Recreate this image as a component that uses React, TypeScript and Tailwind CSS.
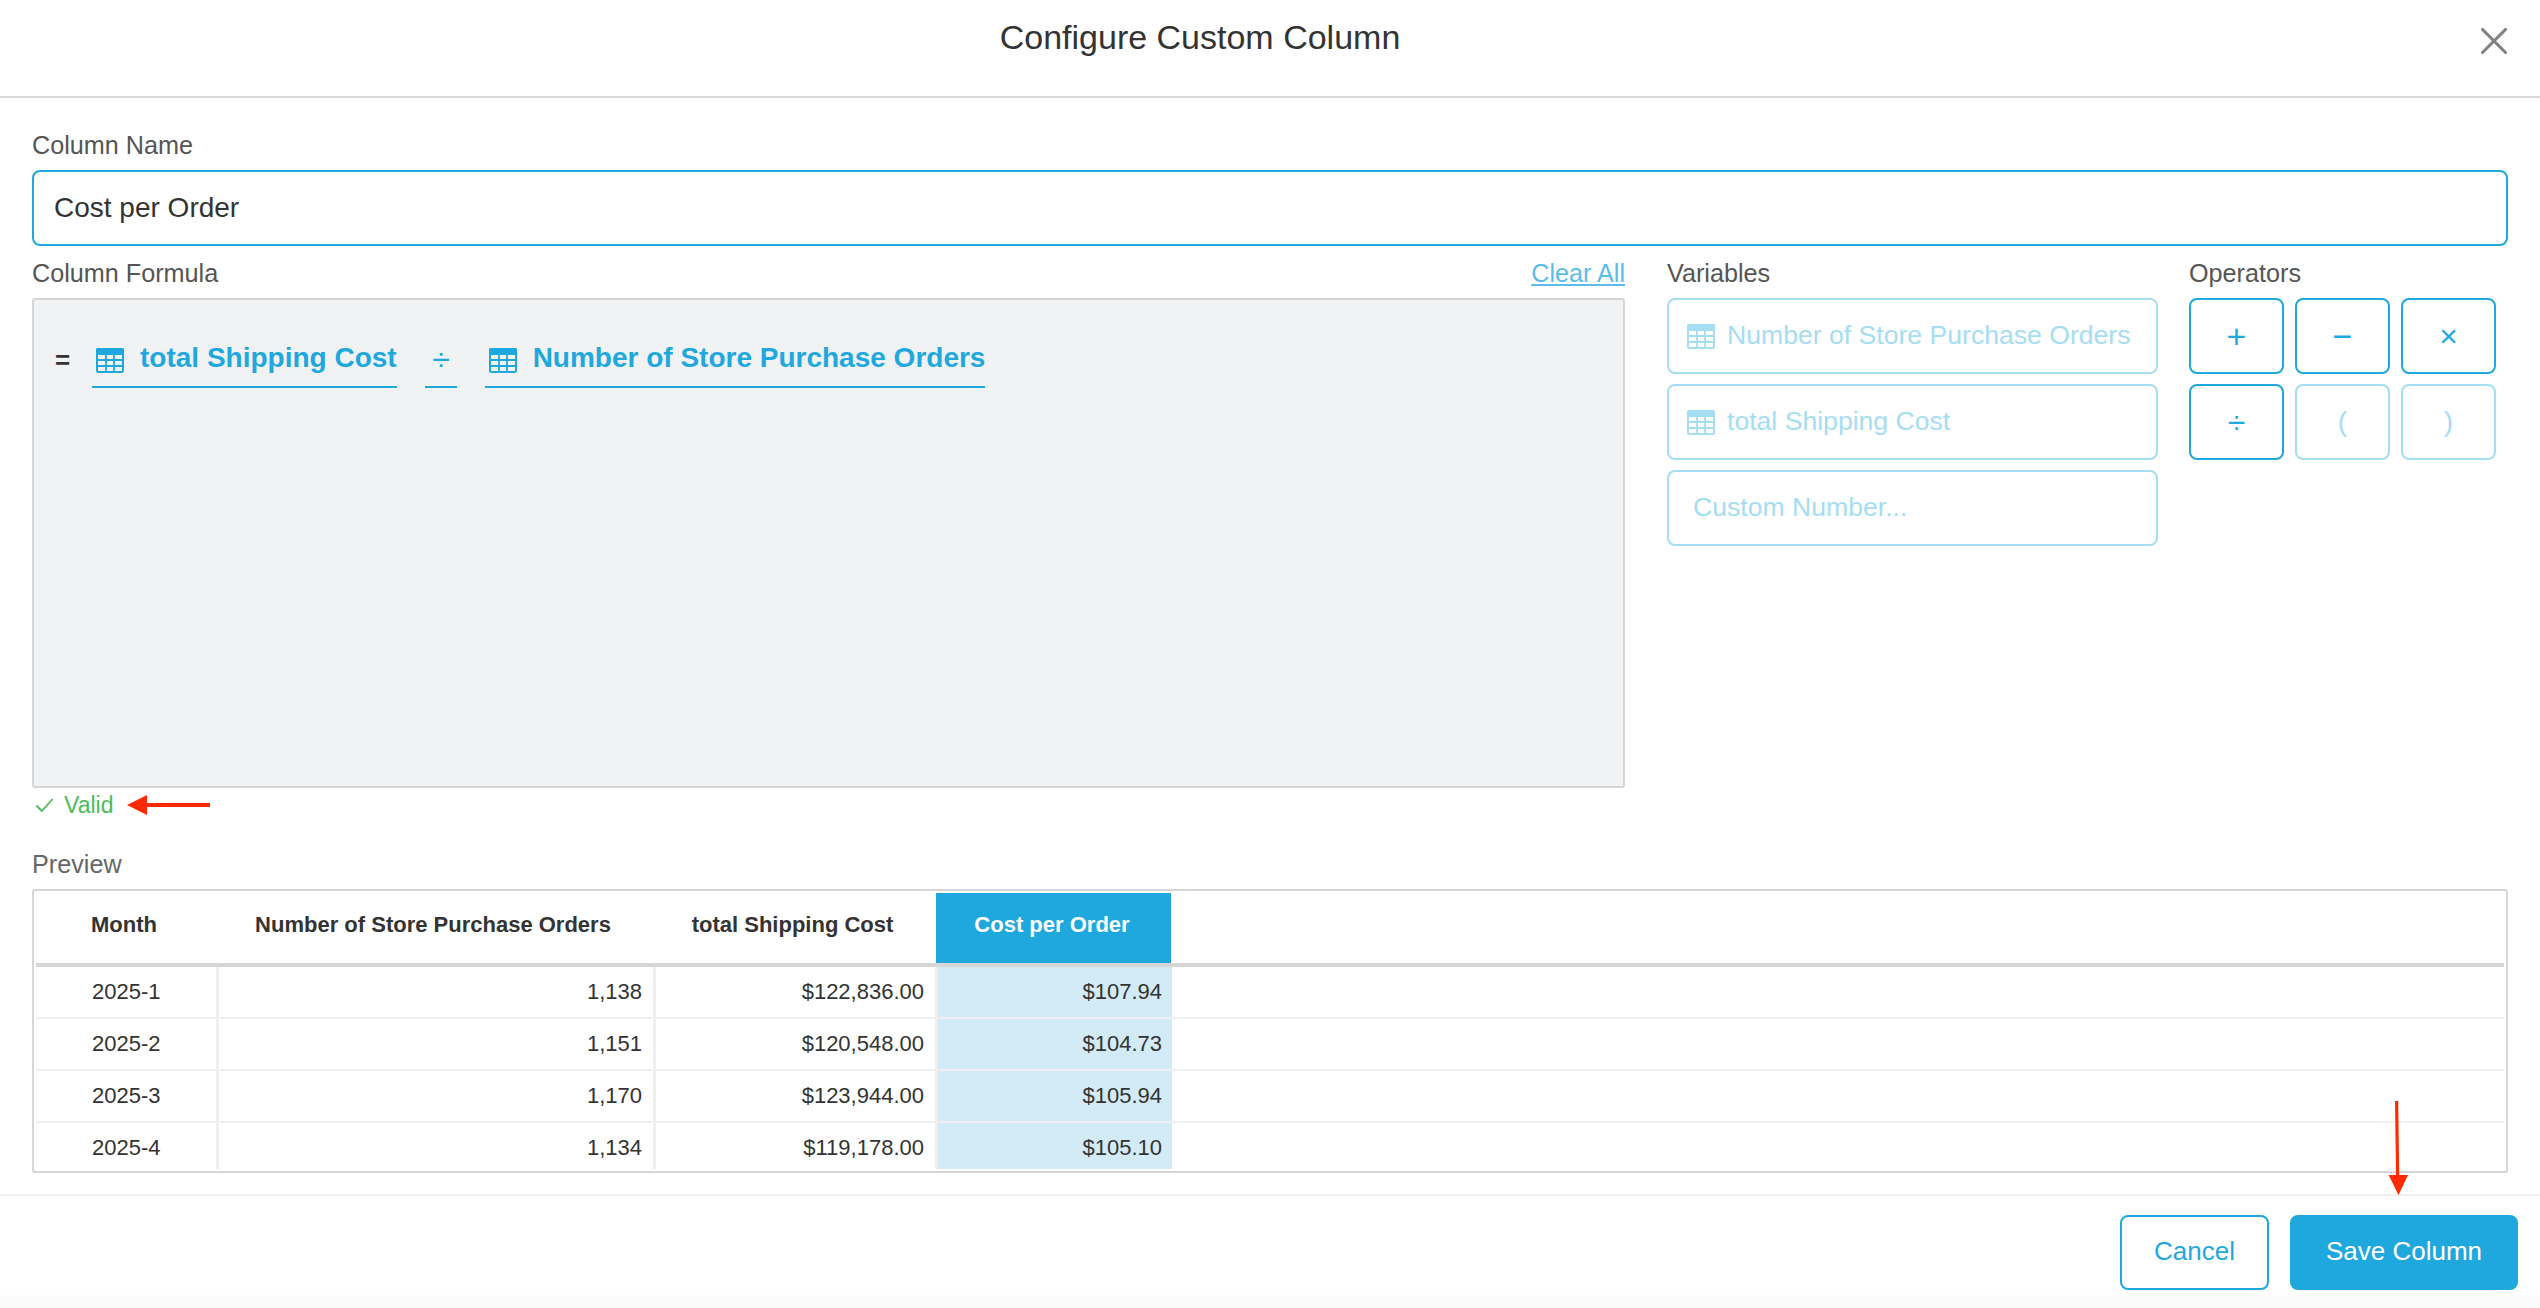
import React from 'react';
import { X } from 'lucide-react';

const TableIcon = ({ light }: { light?: boolean }) => {
  const color = light ? '#a5ddf3' : '#1fa8de';
  return (
    <svg width="28" height="25" viewBox="0 0 28 25" fill="none" className="shrink-0">
      <path d="M0 2a2 2 0 0 1 2-2h24a2 2 0 0 1 2 2v5H0z" fill={color} />
      <rect x="1" y="1" width="26" height="23" rx="1.5" stroke={color} strokeWidth="2" />
      <path d="M1 12h26M1 18h26M10 6v18M18 6v18" stroke={color} strokeWidth="1.8" />
    </svg>
  );
};

const rows = [
  ['2025-1', '1,138', '$122,836.00', '$107.94'],
  ['2025-2', '1,151', '$120,548.00', '$104.73'],
  ['2025-3', '1,170', '$123,944.00', '$105.94'],
  ['2025-4', '1,134', '$119,178.00', '$105.10'],
];

const Op = ({ label, size, dim }: { label: string; size: string; dim?: boolean }) => (
  <div
    className={`flex items-center justify-center h-[76px] rounded-lg border-2 ${size} ${
      dim ? 'border-[#a5ddf3] text-[#a5ddf3]' : 'border-[#1fa8de] text-[#1fa8de]'
    }`}
  >
    {label}
  </div>
);

const Variable = ({ label }: { label: string }) => (
  <div className="flex items-center gap-[12px] h-[76px] px-[18px] rounded-lg border-2 border-[#a5ddf3] text-[26.6px] text-[#a5ddf3]">
    <TableIcon light />
    <span>{label}</span>
  </div>
);

const Chip = ({ label }: { label: string }) => (
  <div className="flex items-start gap-[16px] h-[47px] pl-[4px] border-b-2 border-[#1fa8de] text-[28px] leading-[34px] font-bold text-[#1fa8de]">
    <div className="mt-[7px]">
      <TableIcon />
    </div>
    <span>{label}</span>
  </div>
);

export default function App() {
  return (
    <div className="relative h-[1308px] overflow-hidden bg-white [font-family:'Liberation_Sans',Arial,sans-serif]">
      {/* header */}
      <div className="relative h-[98px] border-b-2 border-[#d9d9d9]">
        <div className="pt-[16px] pr-[140px] text-center text-[34px] leading-[42px] text-[#333]">
          Configure Custom Column
        </div>
        <X className="absolute right-[23px] top-[18px] text-[#808080]" size={46} strokeWidth={1.6} />
      </div>

      {/* body */}
      <div className="px-8 pt-[31px]">
        <div className="h-[32px] mb-[9px] text-[25.2px] leading-[32px] text-[#555]">Column Name</div>
        <div className="flex items-center h-[76px] px-[20px] rounded-lg border-2 border-[#1fa8de] text-[28px] text-[#333]">
          Cost per Order
        </div>

        <div className="flex mt-[11px]">
          <div className="w-[1593px]">
            <div className="flex justify-between h-[32px] mb-[9px] text-[25.2px] leading-[32px] text-[#555]">
              <span>Column Formula</span>
              <span className="text-[#5bbde6] underline">Clear All</span>
            </div>
            <div className="flex items-start gap-[28px] h-[490px] pt-[41px] pl-[21px] rounded-[3px] border-2 border-[#d4d5d7] bg-[#f1f2f4]">
              <div className="w-[15px] -mr-[6px] text-[26px] leading-[38px] font-bold text-[#333]">=</div>
              <Chip label="total Shipping Cost" />
              <div className="w-[32px] h-[47px] pl-[1px] border-b-2 border-[#1fa8de] text-center text-[32px] leading-[36px] text-[#1fa8de]">
                ÷
              </div>
              <Chip label="Number of Store Purchase Orders" />
            </div>
          </div>

          <div className="w-[491px] ml-[42px]">
            <div className="h-[32px] mb-[9px] text-[25.2px] leading-[32px] text-[#555]">Variables</div>
            <div className="flex flex-col gap-[10px]">
              <Variable label="Number of Store Purchase Orders" />
              <Variable label="total Shipping Cost" />
              <div className="flex items-center h-[76px] px-[24px] rounded-lg border-2 border-[#a5ddf3] text-[26.6px] text-[#a5ddf3]">
                Custom Number...
              </div>
            </div>
          </div>

          <div className="w-[307px] ml-[31px]">
            <div className="h-[32px] mb-[9px] text-[25.2px] leading-[32px] text-[#555]">Operators</div>
            <div className="grid grid-cols-3 gap-x-[11px] gap-y-[10px]">
              <Op label="+" size="text-[34px]" />
              <Op label="−" size="text-[34px]" />
              <Op label="×" size="text-[32px]" />
              <Op label="÷" size="text-[32px]" />
              <Op label="(" size="text-[28px]" dim />
              <Op label=")" size="text-[28px]" dim />
            </div>
          </div>
        </div>

        <div className="flex items-center h-[34px] text-[23px] text-[#4cbb5a]">
          <svg width="19" height="14" viewBox="0 0 18 14" fill="none" className="ml-[3px] mr-[10px]">
            <path d="M0.8 7.5l5.4 5.5L17.2 1" stroke="#4cbb5a" strokeWidth="1.8" />
          </svg>
          Valid
        </div>

        <div className="mt-[26px] h-[32px] mb-[9px] text-[25.2px] leading-[32px] text-[#666]">Preview</div>

        {/* preview table */}
        <div className="h-[284px] p-[2px] rounded-[3px] border-2 border-[#d6d6d6] text-[22px] text-[#333] overflow-hidden">
          <div className="grid grid-cols-[176px_442px_282px_235px] h-[70px] font-bold">
            <div className="flex items-center justify-center pb-[7px]">Month</div>
            <div className="flex items-center justify-center pb-[7px]">Number of Store Purchase Orders</div>
            <div className="flex items-center justify-center pb-[7px] pr-[5px]">total Shipping Cost</div>
            <div className="flex items-center justify-center pb-[7px] pr-[3px] bg-[#1fa8de] text-white">Cost per Order</div>
          </div>
          <div className="h-[4px] bg-[#d6d6d6]" />
          {rows.map((r, i) => (
            <div
              key={r[0]}
              className={`grid grid-cols-[183px_437px_282px_234px] ${
                i < 3 ? 'h-[52px] border-b-2 border-[#efefef]' : 'h-[46px]'
              } leading-[50px] overflow-hidden`}
            >
              <div className="pl-[56px] border-r-[3px] border-[#efefef]">{r[0]}</div>
              <div className="pr-[11px] text-right border-r-[3px] border-[#efefef]">{r[1]}</div>
              <div className="pr-[11px] text-right border-r-[3px] border-[#efefef]">{r[2]}</div>
              <div className="pr-[10px] text-right bg-[#d2ebf7]">{r[3]}</div>
            </div>
          ))}
        </div>
      </div>

      {/* footer */}
      <div className="flex justify-end gap-[21px] h-[114px] mt-[21px] pt-[19px] pr-[22px] border-t-2 border-[#efefef] bg-linear-to-b from-white from-80% to-[#fafafa] text-[26px]">
        <div className="flex items-center justify-center w-[149px] h-[75px] pb-[2px] rounded-lg border-2 border-[#1fa8de] bg-white text-[#1fa8de]">
          Cancel
        </div>
        <div className="flex items-center justify-center w-[228px] h-[75px] pb-[2px] rounded-lg bg-[#1fa8de] text-white">
          Save Column
        </div>
      </div>

      {/* red annotation arrows */}
      <svg className="absolute left-[127px] top-[795px]" width="83" height="20" viewBox="0 0 83 20">
        <path d="M0 10L20 0v8h63v4H20v8z" fill="#ff2a00" />
      </svg>
      <svg className="absolute left-[2386px] top-[1101px]" width="24" height="94" viewBox="0 0 24 94">
        <path d="M9 0h3.2l1 74h8.8L12.5 94 2.6 74H10z" fill="#ff2a00" />
      </svg>
    </div>
  );
}
